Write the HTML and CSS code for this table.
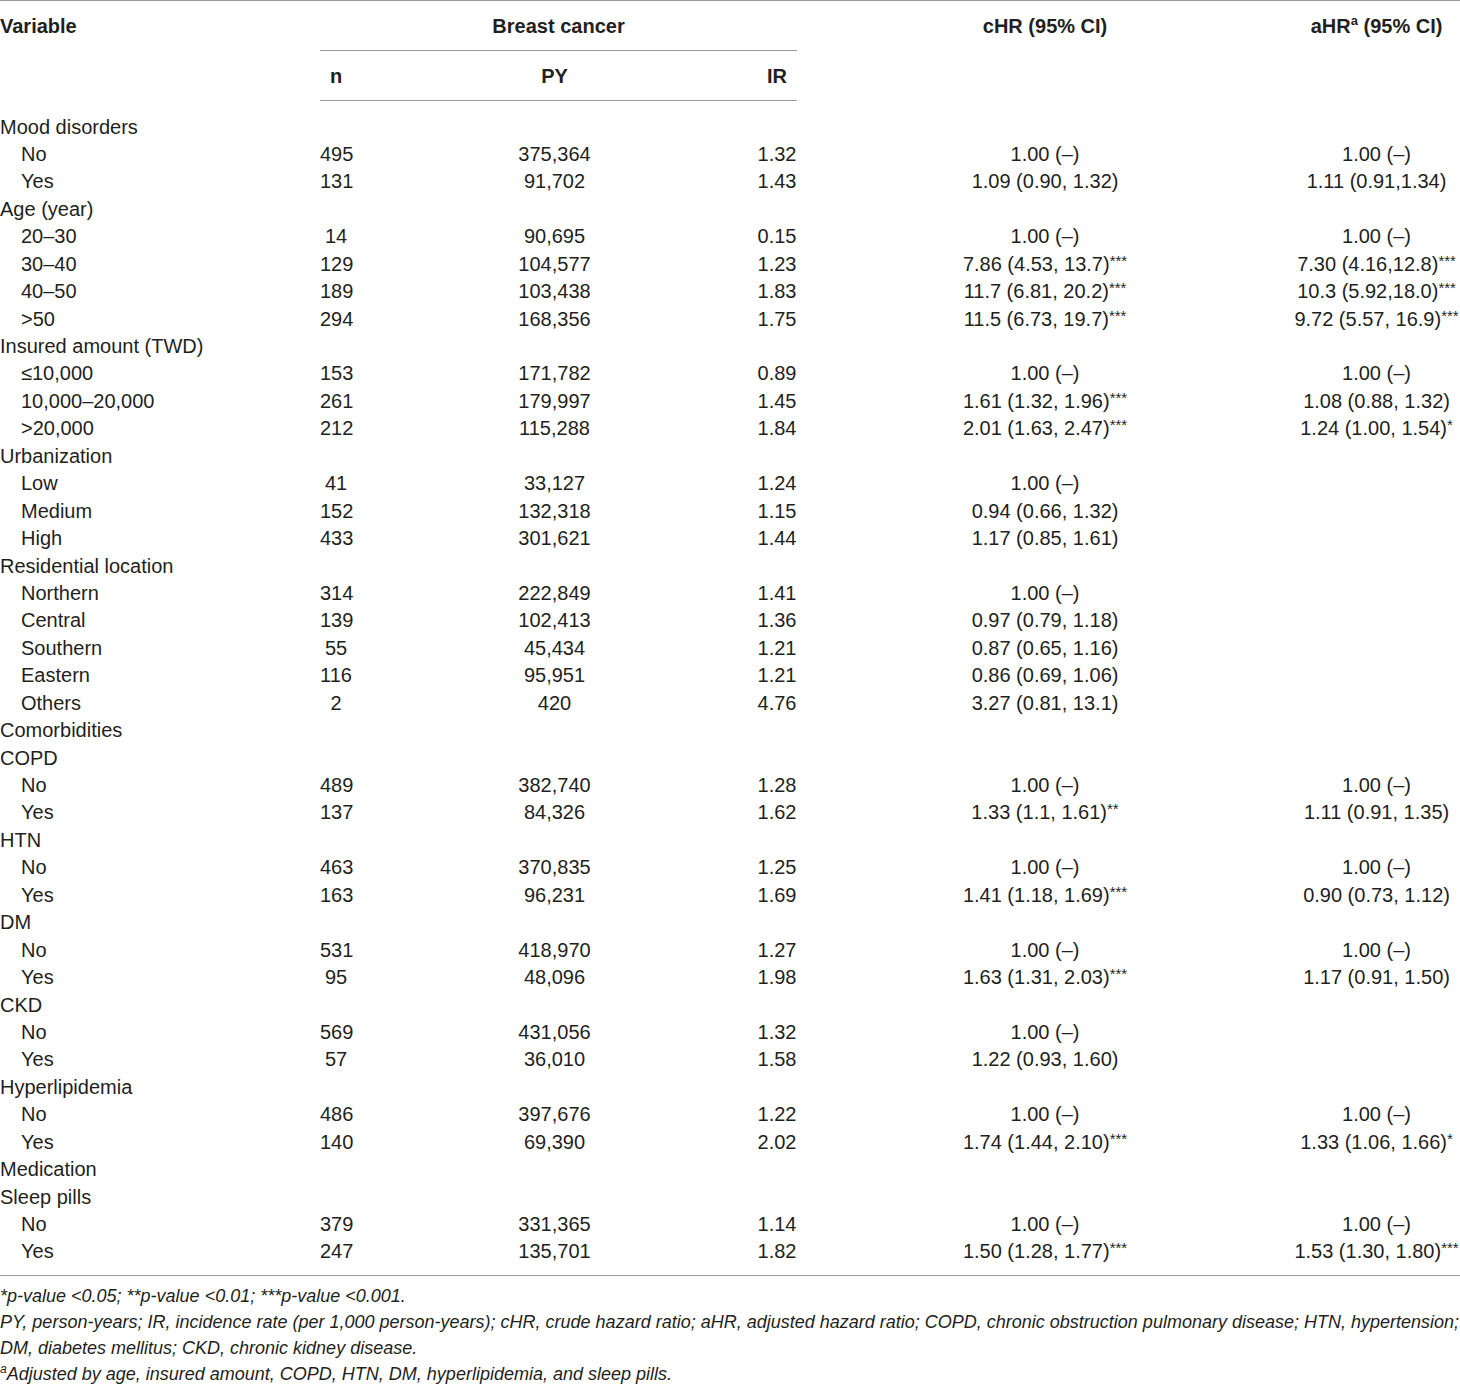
FILE: index.html
```html
<!DOCTYPE html>
<html lang="en">
<head>
<meta charset="utf-8">
<title>Breast cancer table</title>
<link rel="stylesheet" href="styles.css">
</head>
<body>
<div class="wrap">
<table class="tbl">
  <colgroup>
    <col class="c-var"><col class="c-n"><col class="c-py"><col class="c-ir"><col class="c-chr"><col class="c-ahr">
  </colgroup>
  <thead>
    <tr class="h1">
      <th class="left" rowspan="2">Variable</th>
      <th colspan="3" class="group">Breast cancer</th>
      <th rowspan="2">cHR (95% CI)</th>
      <th rowspan="2" class="ahr">aHR<sup>a</sup> (95% CI)</th>
    </tr>
    <tr class="h2">
      <th>n</th><th>PY</th><th>IR</th>
    </tr>
  </thead>
  <tbody>
    <tr class="first"><td class="cat">Mood disorders</td><td></td><td></td><td></td><td></td><td></td></tr>
    <tr><td class="sub">No</td><td>495</td><td>375,364</td><td>1.32</td><td>1.00 (–)</td><td>1.00 (–)</td></tr>
    <tr><td class="sub">Yes</td><td>131</td><td>91,702</td><td>1.43</td><td>1.09 (0.90, 1.32)</td><td>1.11 (0.91,1.34)</td></tr>
    <tr><td class="cat">Age (year)</td><td></td><td></td><td></td><td></td><td></td></tr>
    <tr><td class="sub">20–30</td><td>14</td><td>90,695</td><td>0.15</td><td>1.00 (–)</td><td>1.00 (–)</td></tr>
    <tr><td class="sub">30–40</td><td>129</td><td>104,577</td><td>1.23</td><td>7.86 (4.53, 13.7)<sup class="s">***</sup></td><td>7.30 (4.16,12.8)<sup class="s">***</sup></td></tr>
    <tr><td class="sub">40–50</td><td>189</td><td>103,438</td><td>1.83</td><td>11.7 (6.81, 20.2)<sup class="s">***</sup></td><td>10.3 (5.92,18.0)<sup class="s">***</sup></td></tr>
    <tr><td class="sub">&gt;50</td><td>294</td><td>168,356</td><td>1.75</td><td>11.5 (6.73, 19.7)<sup class="s">***</sup></td><td>9.72 (5.57, 16.9)<sup class="s">***</sup></td></tr>
    <tr><td class="cat">Insured amount (TWD)</td><td></td><td></td><td></td><td></td><td></td></tr>
    <tr><td class="sub">≤10,000</td><td>153</td><td>171,782</td><td>0.89</td><td>1.00 (–)</td><td>1.00 (–)</td></tr>
    <tr><td class="sub">10,000–20,000</td><td>261</td><td>179,997</td><td>1.45</td><td>1.61 (1.32, 1.96)<sup class="s">***</sup></td><td>1.08 (0.88, 1.32)</td></tr>
    <tr><td class="sub">&gt;20,000</td><td>212</td><td>115,288</td><td>1.84</td><td>2.01 (1.63, 2.47)<sup class="s">***</sup></td><td>1.24 (1.00, 1.54)<sup class="s">*</sup></td></tr>
    <tr><td class="cat">Urbanization</td><td></td><td></td><td></td><td></td><td></td></tr>
    <tr><td class="sub">Low</td><td>41</td><td>33,127</td><td>1.24</td><td>1.00 (–)</td><td></td></tr>
    <tr><td class="sub">Medium</td><td>152</td><td>132,318</td><td>1.15</td><td>0.94 (0.66, 1.32)</td><td></td></tr>
    <tr><td class="sub">High</td><td>433</td><td>301,621</td><td>1.44</td><td>1.17 (0.85, 1.61)</td><td></td></tr>
    <tr><td class="cat">Residential location</td><td></td><td></td><td></td><td></td><td></td></tr>
    <tr><td class="sub">Northern</td><td>314</td><td>222,849</td><td>1.41</td><td>1.00 (–)</td><td></td></tr>
    <tr><td class="sub">Central</td><td>139</td><td>102,413</td><td>1.36</td><td>0.97 (0.79, 1.18)</td><td></td></tr>
    <tr><td class="sub">Southern</td><td>55</td><td>45,434</td><td>1.21</td><td>0.87 (0.65, 1.16)</td><td></td></tr>
    <tr><td class="sub">Eastern</td><td>116</td><td>95,951</td><td>1.21</td><td>0.86 (0.69, 1.06)</td><td></td></tr>
    <tr><td class="sub">Others</td><td>2</td><td>420</td><td>4.76</td><td>3.27 (0.81, 13.1)</td><td></td></tr>
    <tr><td class="cat">Comorbidities</td><td></td><td></td><td></td><td></td><td></td></tr>
    <tr><td class="cat">COPD</td><td></td><td></td><td></td><td></td><td></td></tr>
    <tr><td class="sub">No</td><td>489</td><td>382,740</td><td>1.28</td><td>1.00 (–)</td><td>1.00 (–)</td></tr>
    <tr><td class="sub">Yes</td><td>137</td><td>84,326</td><td>1.62</td><td>1.33 (1.1, 1.61)<sup class="s">**</sup></td><td>1.11 (0.91, 1.35)</td></tr>
    <tr><td class="cat">HTN</td><td></td><td></td><td></td><td></td><td></td></tr>
    <tr><td class="sub">No</td><td>463</td><td>370,835</td><td>1.25</td><td>1.00 (–)</td><td>1.00 (–)</td></tr>
    <tr><td class="sub">Yes</td><td>163</td><td>96,231</td><td>1.69</td><td>1.41 (1.18, 1.69)<sup class="s">***</sup></td><td>0.90 (0.73, 1.12)</td></tr>
    <tr><td class="cat">DM</td><td></td><td></td><td></td><td></td><td></td></tr>
    <tr><td class="sub">No</td><td>531</td><td>418,970</td><td>1.27</td><td>1.00 (–)</td><td>1.00 (–)</td></tr>
    <tr><td class="sub">Yes</td><td>95</td><td>48,096</td><td>1.98</td><td>1.63 (1.31, 2.03)<sup class="s">***</sup></td><td>1.17 (0.91, 1.50)</td></tr>
    <tr><td class="cat">CKD</td><td></td><td></td><td></td><td></td><td></td></tr>
    <tr><td class="sub">No</td><td>569</td><td>431,056</td><td>1.32</td><td>1.00 (–)</td><td></td></tr>
    <tr><td class="sub">Yes</td><td>57</td><td>36,010</td><td>1.58</td><td>1.22 (0.93, 1.60)</td><td></td></tr>
    <tr><td class="cat">Hyperlipidemia</td><td></td><td></td><td></td><td></td><td></td></tr>
    <tr><td class="sub">No</td><td>486</td><td>397,676</td><td>1.22</td><td>1.00 (–)</td><td>1.00 (–)</td></tr>
    <tr><td class="sub">Yes</td><td>140</td><td>69,390</td><td>2.02</td><td>1.74 (1.44, 2.10)<sup class="s">***</sup></td><td>1.33 (1.06, 1.66)<sup class="s">*</sup></td></tr>
    <tr><td class="cat">Medication</td><td></td><td></td><td></td><td></td><td></td></tr>
    <tr><td class="cat">Sleep pills</td><td></td><td></td><td></td><td></td><td></td></tr>
    <tr><td class="sub">No</td><td>379</td><td>331,365</td><td>1.14</td><td>1.00 (–)</td><td>1.00 (–)</td></tr>
    <tr class="last"><td class="sub">Yes</td><td>247</td><td>135,701</td><td>1.82</td><td>1.50 (1.28, 1.77)<sup class="s">***</sup></td><td>1.53 (1.30, 1.80)<sup class="s">***</sup></td></tr>
  </tbody>
</table>
<div class="notes">
  <p>*p-value &lt;0.05; **p-value &lt;0.01; ***p-value &lt;0.001.</p>
  <p>PY, person-years; IR, incidence rate (per 1,000 person-years); cHR, crude hazard ratio; aHR, adjusted hazard ratio; COPD, chronic obstruction pulmonary disease; HTN, hypertension; DM, diabetes mellitus; CKD, chronic kidney disease.</p>
  <p><sup class="na">a</sup>Adjusted by age, insured amount, COPD, HTN, DM, hyperlipidemia, and sleep pills.</p>
</div>
</div>
</body>
</html>
```

FILE: styles.css
```css
html, body {
  margin: 0;
  padding: 0;
  background: #ffffff;
}
body {
  font-family: "Liberation Sans", Arial, sans-serif;
  color: #231f20;
  width: 1460px;
}
.wrap {
  width: 1460px;
}
.tbl {
  width: 1460px;
  border-collapse: collapse;
  table-layout: fixed;
  font-size: 20px;
  border-top: 1px solid #9a9a9a;
  border-bottom: 1px solid #9a9a9a;
}
.c-var { width: 320px; }
.c-n { width: 32px; }
.c-py { width: 405px; }
.c-ir { width: 40px; }
.c-chr { width: 496px; }
.c-ahr { width: 167px; }

th {
  font-weight: bold;
  text-align: center;
  padding: 0;
  white-space: nowrap;
  line-height: 22px;
}
.h1 th {
  height: 49px;
  vertical-align: middle;
}
.h1 th[rowspan] {
  vertical-align: top;
  padding-top: 14px;
}
.h1 th.group {
  border-bottom: 1px solid #9a9a9a;
}
.h2 th {
  height: 49px;
  border-bottom: 1px solid #9a9a9a;
}
th.left { text-align: left; }
th sup {
  font-size: 13px;
  line-height: 0;
  vertical-align: 8px;
}

td {
  padding: 0;
  line-height: 27.44px;
  text-align: center;
  white-space: nowrap;
}
td.cat { text-align: left; }
td.sub { text-align: left; padding-left: 21px; }
tr.first td { padding-top: 13px; }
tr.last td { padding-bottom: 9px; }

sup.s {
  font-size: 15px;
  line-height: 0;
  vertical-align: 5px;
}

.notes {
  font-size: 18px;
  font-style: italic;
  padding-top: 7px;
}
.notes p {
  margin: 0;
  line-height: 26px;
}
sup.na {
  font-size: 12px;
  line-height: 0;
  vertical-align: 7px;
}
```
